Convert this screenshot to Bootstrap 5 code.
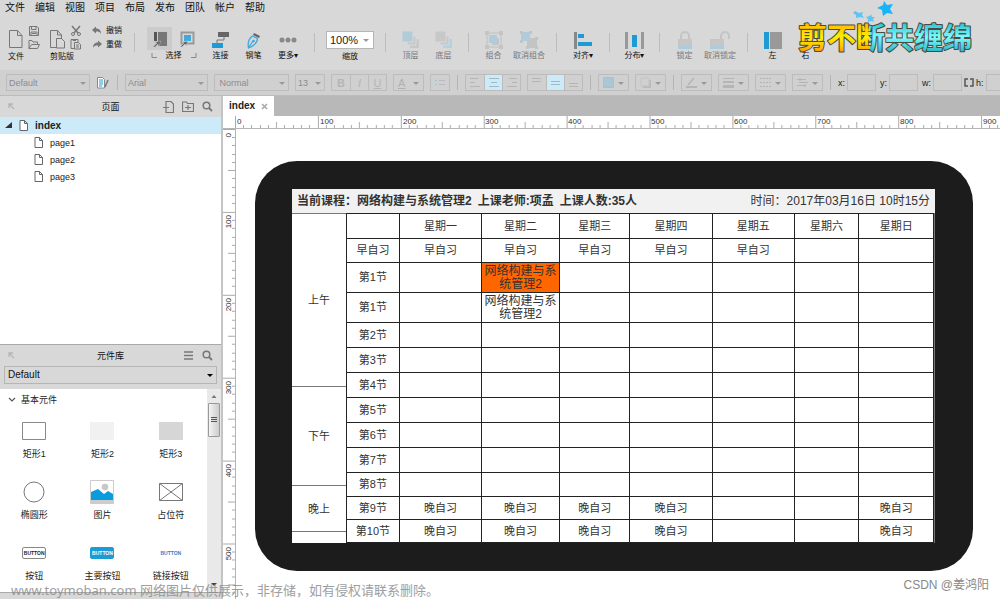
<!DOCTYPE html>
<html lang="zh-CN">
<head>
<meta charset="utf-8">
<meta name="viewport" content="width=device-width, initial-scale=1">
<title>index</title>
<link href="https://cdn.jsdelivr.net/npm/bootstrap@5.3.0/dist/css/bootstrap.min.css" rel="stylesheet">
<script src="https://cdn.jsdelivr.net/npm/bootstrap@5.3.0/dist/js/bootstrap.bundle.min.js"></script>
<style>
body{font-family:"Liberation Sans","Noto Sans CJK SC",sans-serif;font-size:9px;line-height:12px;color:#222;background:#d8d8d8}
button{border:0;background:none;padding:0;color:inherit;font:inherit}
svg{display:block;flex:none}
.menubar{height:16px;padding-left:5px;gap:10px;font-size:10px;line-height:16px}
.menubar a{color:#111;text-decoration:none}
.toolbar{height:54px;padding-left:8px}
.toolbar>*{flex:none}
.vline{width:1px;height:19px;margin:17px 8px 0;background:#bdbdbd}
.tool{width:33px;padding-top:14px;font-size:8px;white-space:nowrap;color:#111;display:flex;flex-direction:column;align-items:center}
.tool .pic{height:20px;display:flex;align-items:center}
.tool.mid{width:36px}.tool.long{width:38px}
.tool:disabled{color:#777}
.filegrp{width:42px;padding-top:9px;font-size:8px;color:#111}
.filegrp .lbl{display:block;white-space:nowrap}
.filegrp .pair{height:26px;gap:4px}
.undo{width:34px;padding-top:9px;font-size:8px;color:#111}
.undo button{display:flex;align-items:center;gap:3px;height:12px;margin-bottom:2px;white-space:nowrap}
.pick{width:61px;padding-top:11px;font-size:8px;color:#111}
.pick .cell{width:25px;height:23px;display:flex;align-items:center;justify-content:center}
.pick .on{background:#cbcbcb}
.zoombox{width:54px;padding-top:15px;font-size:8px;text-align:center;color:#111}
select{appearance:none;border-radius:0;outline:0}
.zoombox select{display:block;width:48px;height:18px;margin:0 auto 2px;border:1px solid #b5b5b5;background:#fff;font-size:11px;padding:0 3px;color:#222}
.drop{position:relative;display:block}
.drop::after{content:"";position:absolute;right:4px;top:50%;margin-top:-1px;border:3px solid transparent;border-top-color:#999;border-bottom:0;pointer-events:none}
.zoombox .drop::after{right:8px}
.formatbar{height:26px;padding:0 0 0 6px;gap:6px;background:#d0d0d0;border-bottom:1px solid #bbb;overflow:hidden}
.formatbar>*{flex:none}
.formatbar .drop select{display:block;width:100%;height:17px;border:1px solid #bcbcbc;background:transparent;color:#8c8c8c;padding:0 2px;font-size:9px;opacity:1}
.fstyle{width:84px}.fface{width:83px}.fweight{width:75px}.fsize{width:30px}
.boxes{height:17px;border:1px solid #bcbcbc;display:flex}
.boxes button{width:18px;display:flex;align-items:center;justify-content:center;color:#b5b5b5;font-size:11px}
.boxes button+button{border-left:1px solid #bcbcbc}
.boxes .on{background:#cceaf8}
.combo{width:31px;height:17px;border:1px solid #bcbcbc;display:flex;align-items:center;padding-left:4px;font-size:11px;color:#b0b0b0}
.bsep{width:1px;height:15px;background:#b5b5b5;margin:0 1px}
.coords{gap:2px}
.coords input{width:29px;height:17px;border:1px solid #bcbcbc;background:transparent;padding:0 2px;margin-right:2px}
.coords .last{margin-right:0}
.side{width:223px;border-right:2px solid #c4c4c4;background:#fff;flex:none}
.pagespanel{height:248px;flex:none}
.phead{height:21px;padding:0 8px;background:#d8d8d8;position:relative;gap:8px}
.phead h2{position:absolute;left:0;right:0;text-align:center;font-size:9px;line-height:12px;margin:0;font-weight:400;color:#111;pointer-events:none}
.trow{height:17px;padding-left:34px;gap:7px;display:flex;align-items:center;color:#222;text-decoration:none}
.trow.top{background:#cceaf8;padding-left:5px;font-weight:700;font-size:10px}
.library{border-top:1px solid #aaa;min-height:0}
.libpick{background:#d8d8d8;padding:0 4px 5px}
.libpick select{display:block;width:100%;height:18px;border:1px solid #b5b5b5;background:transparent;font-size:10px;padding:0 3px;color:#111}
.libpick .drop::after{border-top-color:#000}
.libhead{padding:5px 0 5px 8px;gap:5px}
.tiles{display:grid;grid-template-columns:repeat(3,1fr);padding-right:2px}
.tiles button{height:61px;display:flex;flex-direction:column;align-items:center;color:#222;padding-top:8px}
.tiles .pic{height:24px;display:flex;align-items:center;margin-bottom:5px}
.minibtn{width:24px;height:12px;border:1px solid #888;border-radius:2px;font-size:5px;line-height:10px;font-weight:700;text-align:center}
.minibtn.blue{background:#1d9bd5;border-color:#1d9bd5;color:#fff}
.minibtn.plain{border-color:transparent;color:#3b7dc4}
.scroller{width:14px;background:#e9e9e9;flex:none}
.thumb{width:12px;height:34px;border:1px solid #999;border-radius:1px;background:linear-gradient(90deg,#f4f4f4,#ccc)}
.foot{height:7px;background:#d8d8d8;border-top:1px solid #aaa}
.tabs{height:20px;background:#b8b8b8;flex:none}
.tabs .tab1{background:#fff;width:51px;padding-left:6px;gap:6px;font-weight:700;font-size:10px}
.workarea,.stage{min-width:0}
.workbody{min-height:0}
.hruler{height:13px;background:#fff;flex:none;overflow:hidden;border-bottom:1px solid #b5b5b5}
.vruler{width:13px;flex:none;overflow:hidden;border-right:1px solid #b5b5b5}
.stage{padding:32px 27px 27px 19px}
.device{background:#1c1c1c;border-radius:42px;padding:28px 38px 28px 37px}
.infobar{background:#f1f1f1;height:24px;padding:0 5px;font-size:12px;color:#333;white-space:nowrap}
.lesson{gap:6px;font-weight:700}
.plan{background:#fff;border-right:1px solid #777}
.parts{width:54px;flex:none;font-size:11px;color:#333}
.parts div{display:flex;align-items:center;justify-content:center;border-top:1px solid #777}
.am{height:173px}.pm{height:99px}.eve{height:46px}
.timetable{table-layout:fixed;border-collapse:collapse;width:100%;font-size:11px;line-height:13px;color:#333;text-align:center}
.timetable th,.timetable td{border:1px solid #222;padding:0 2px;font-weight:400;height:25px}
.timetable .short>*{height:24px}.timetable .tall>*{height:30px}.timetable .low>*{height:23px}
.timetable .course{font-size:12px}
.timetable .now{background:#f60}
.timetable th:nth-child(1){width:9%}.timetable th:nth-child(2){width:14%}.timetable th:nth-child(3){width:78px}.timetable th:nth-child(4){width:12%}.timetable th:nth-child(5){width:14%}.timetable th:nth-child(6){width:14%}.timetable th:nth-child(7){width:11%}
.brandmark{position:absolute;right:20px;top:0}
.brandmark text{font-family:"Noto Sans CJK SC",sans-serif;font-weight:700;font-size:29px}
.note{position:absolute;left:11px;bottom:0;font:13px/18px "Noto Sans","Noto Sans CJK SC",sans-serif;color:#888;opacity:.8;white-space:nowrap}
.credit{position:absolute;right:11px;bottom:5px;font-size:12px;line-height:18px;color:#888}
</style>
</head>
<body class="d-flex flex-column vh-100 overflow-hidden position-relative">
<svg width="0" height="0" class="position-absolute">
<symbol id="sheet" viewBox="0 0 9 11"><path d="M1 .5h4.500l3 3v7H1zM5.500.5v3h3" fill="#fff" stroke="#666"/></symbol>
<symbol id="lens" viewBox="0 0 11 11"><circle cx="4.500" cy="4.500" r="3.300" fill="none" stroke="#777" stroke-width="1.500"/><path d="M7 7l3 3" stroke="#777" stroke-width="1.800"/></symbol>
<symbol id="nw" viewBox="0 0 7 7"><path d="M1 5V1h4M1 1l5 5" fill="none" stroke="#b5b5b5" stroke-width="1.300"/></symbol>
</svg>

<nav class="menubar d-flex flex-shrink-0">
<a href="#">文件</a><a href="#">编辑</a><a href="#">视图</a><a href="#">项目</a><a href="#">布局</a><a href="#">发布</a><a href="#">团队</a><a href="#">帐户</a><a href="#">帮助</a>
</nav>

<div class="toolbar d-flex flex-shrink-0">
<div class="filegrp"><div class="pair d-flex">
<button aria-label="新建"><svg width="16" height="26" viewBox="0 0 16 26"><path d="M1.500 5.500h8l4.500 5v12H1.500zM9.500 5.500v5h4.500" fill="none" stroke="#777"/></svg></button>
<span><button class="d-block" aria-label="保存"><svg width="12" height="13"><path d="M1.500 1.500h7.500l1.500 1.500v7.500h-9zM3.500 1.500v3h4.500v-3M3 10.500V7h6v3.500M4 8.500h4" fill="none" stroke="#777"/></svg></button><button class="d-block" aria-label="打开"><svg width="12" height="13"><path d="M1 10.500v-8h3l1 1.500h4.500v2.500M1 10.500l2.500-4h8l-2 4z" fill="none" stroke="#777"/></svg></button></span></div>
<span class="lbl">文件</span></div>
<div class="filegrp"><div class="pair d-flex">
<button aria-label="粘贴"><svg width="16" height="26" viewBox="0 0 16 26"><path d="M6.500 22.500h-6v-17h7l4 4.500v4M7.500 5.500V10h4M6.500 13.500h5l3 3v6.500h-8z" fill="none" stroke="#777"/></svg></button>
<span><button class="d-block" aria-label="剪切"><svg width="12" height="13"><path d="M2 1l6 7M10 1L4 8" stroke="#777" stroke-width="1.500"/><circle cx="3" cy="9" r="1.500" fill="none" stroke="#777"/><circle cx="9" cy="9" r="1.500" fill="none" stroke="#777"/></svg></button><button class="d-block" aria-label="复制"><svg width="12" height="13"><path d="M4 10.500H1v-9h7V4M3 1.500v1h3M4.500 4.500h4l2 2V11h-6zM6 7h3M6 9h3" fill="none" stroke="#777"/></svg></button></span></div>
<span class="lbl">剪贴版</span></div>
<div class="undo">
<button><svg width="11" height="10"><path d="M0 4l4-3.500v2C8 2.500 9 5 9 8 8 6 7 5.500 4 5.500v2z" fill="#777"/></svg>撤销</button>
<button><svg width="11" height="10"><path d="M10 4L6 .5v2C2 2.500 1 5 1 8c1-2 2-2.500 5-2.500v2z" fill="#777"/></svg>重做</button>
</div>
<span class="vline"></span>
<div class="pick">
<div class="d-flex px-1 justify-content-between"><button class="cell on" aria-label="相交选择"><svg width="14" height="16"><path d="M1 1h3v9H1z" fill="#555"/><path d="M5 1h9v14H5z" fill="#777"/><path d="M0 16l4-4-2-1 6-1-2 5-1-2-3 3z" fill="#666" stroke="#bbb" stroke-width=".5"/></svg></button><button class="cell" aria-label="包含选择"><svg width="15" height="16"><path d="M1.500 1.500h12v11h-12z" fill="#d8d8d8" stroke="#999" stroke-width="2"/><path d="M4 4h7v6H4z" fill="#42a9dc"/><path d="M0 16l4-4-2-1 6-1-2 5-1-2-3 3z" fill="#666" stroke="#ddd" stroke-width=".5"/></svg></button></div>
<div class="d-flex justify-content-center align-items-center gap-1"><svg width="7" height="6"><path d="M1 0v4.500h5" fill="none" stroke="#888"/></svg><span class="px-1">选择</span><svg width="7" height="6"><path d="M6 0v4.500H1" fill="none" stroke="#888"/></svg></div>
</div>
<button class="tool"><span class="pic"><svg width="17" height="17"><path d="M6 0h11v5H6z" fill="#666"/><path d="M0 11h11v5H0z" fill="#1d9bd5"/><path d="M12 5v3H5v3" fill="none" stroke="#777"/></svg></span>连接</button>
<button class="tool"><span class="pic"><svg width="14" height="17"><path d="M7 1l6 3-1 2-6-3z" fill="#666"/><path d="M5.500 4l5 2.500c0 4-3 7-9 9.500-1-5 0-9 4-12zM2 15l4-6" fill="none" stroke="#42a9dc" stroke-width="1.300"/><circle cx="6.500" cy="9" r="1.300" fill="#42a9dc"/></svg></span>钢笔</button>
<button class="tool mid"><span class="pic"><svg width="18" height="6"><g fill="#888"><circle cx="3" cy="3" r="2.500"/><circle cx="9" cy="3" r="2.500"/><circle cx="15" cy="3" r="2.500"/></g></svg></span>更多▾</button>
<span class="vline"></span>
<div class="zoombox"><span class="drop"><select id="zoom"><option>100%</option></select></span><label for="zoom" class="d-block">缩放</label></div>
<span class="vline"></span>
<button class="tool" disabled><span class="pic"><svg width="18" height="18"><path d="M8 8h9v9H8z" fill="#c8c8c8"/><path d="M5 5h9v9H5z" fill="#c8c8c8" stroke="#d8d8d8"/><path d="M0 0h11v11H0z" fill="#b1ccd9" stroke="#d8d8d8"/></svg></span>顶层</button>
<button class="tool" disabled><span class="pic"><svg width="18" height="18"><path d="M8 8h9v9H8z" fill="#b1d2e2"/><path d="M5 5h9v9H5z" fill="#c8c8c8" stroke="#d8d8d8"/><path d="M0 0h11v11H0z" fill="#c8c8c8" stroke="#d8d8d8"/></svg></span>底层</button>
<span class="vline"></span>
<button class="tool" disabled><span class="pic"><svg width="18" height="18"><path d="M2 2h14v14H2z" fill="none" stroke="#c0c0c0"/><path d="M7 7h7v7H7z" fill="#c4c4c4"/><path d="M4 4h8v8H4z" fill="#b1ccd9"/><path d="M0 0h4v4H0zM14 0h4v4h-4zM0 14h4v4H0zM14 14h4v4h-4z" fill="#c4c4c4"/></svg></span>组合</button>
<button class="tool long" disabled><span class="pic"><svg width="18" height="18"><path d="M7 7h10v10H7z" fill="#c4c4c4"/><path d="M1 1h9v9H1z" fill="#b1ccd9"/><path d="M0 0h3v3H0zM9 0h3v3H9zM0 9h3v3H0zM15 6h3v3h-3zM6 15h3v3H6zM15 15h3v3h-3z" fill="#bbc5ca"/></svg></span>取消组合</button>
<span class="vline"></span>
<button class="tool mid"><span class="pic"><svg width="18" height="17"><path d="M0 0h3v17H0z" fill="#888"/><path d="M4 2h6v4H4zM4 10h14v4H4z" fill="#1d9bd5"/></svg></span>对齐▾</button>
<span class="vline"></span>
<button class="tool"><span class="pic"><svg width="19" height="17"><path d="M0 0h3v17H0zM16 0h3v17h-3z" fill="#999"/><path d="M7 3h5v12H7z" fill="#1d9bd5"/></svg></span>分布▾</button>
<span class="vline"></span>
<button class="tool" disabled><span class="pic"><svg width="16" height="19"><path d="M4 8V5a4 4 0 018 0v3" fill="none" stroke="#c4c4c4" stroke-width="2"/><path d="M1 8h14v7H1z" fill="#c6c6c6"/><path d="M1 15h14v3H1z" fill="#a9cddd"/></svg></span>锁定</button>
<button class="tool long" disabled><span class="pic"><svg width="22" height="19"><path d="M12 8V5a4 4 0 018 0v3" fill="none" stroke="#c4c4c4" stroke-width="2"/><path d="M1 8h14v7H1z" fill="#c6c6c6"/><path d="M1 15h14v3H1z" fill="#a9cddd"/></svg></span>取消锁定</button>
<span class="vline"></span>
<button class="tool"><span class="pic"><svg width="18" height="18"><path d="M0 1h5v17H0z" fill="#1d9bd5"/><path d="M6 1h12v17H6z" fill="#999"/></svg></span>左</button>
<button class="tool"><span class="pic"></span>右</button>
</div>

<div class="formatbar d-flex align-items-center flex-shrink-0">
<span class="drop fstyle"><select aria-label="样式" disabled><option>Default</option></select></span>
<button aria-label="样式编辑器"><svg width="14" height="12"><path d="M1.500.5h5l2 2V11h-7z" fill="#fff" stroke="#888"/><path d="M3 3h4M3 5h4M3 7h4M3 9h3" stroke="#1d9bd5"/><path d="M12 3L9 10" stroke="#777" stroke-width="1.500"/></svg></button>
<span class="bsep"></span>
<span class="drop fface"><select aria-label="字体" disabled><option>Arial</option></select></span>
<span class="drop fweight"><select aria-label="字形" disabled><option>&nbsp;Normal</option></select></span>
<span class="drop fsize"><select aria-label="字号" disabled><option>13</option></select></span>
<div class="boxes"><button><b>B</b></button><button><i>I</i></button><button><u>U</u></button></div>
<button class="combo drop d-flex"><u>A</u></button>
<div class="boxes"><button aria-label="列表"><svg width="10" height="8"><path d="M4 1.500h6M4 5.500h6" stroke="#bbb"/><path d="M0 1.500h2M0 5.500h2" stroke="#9cc8dc"/></svg></button></div>
<span class="bsep"></span>
<div class="boxes">
<button aria-label="左对齐"><svg width="10" height="11"><path d="M0 1.500h8M0 5.500h5M0 9.500h10" stroke="#b5b5b5"/></svg></button>
<button class="on" aria-label="居中"><svg width="10" height="11"><path d="M0 1.500h10M2 5.500h6M0 9.500h10" stroke="#9dbac6"/></svg></button>
<button aria-label="右对齐"><svg width="10" height="11"><path d="M2 1.500h8M5 5.500h5M0 9.500h10" stroke="#b5b5b5"/></svg></button></div>
<div class="boxes">
<button aria-label="顶部"><svg width="10" height="11"><path d="M0 1.500h9M0 4.500h9" stroke="#b5b5b5"/></svg></button>
<button class="on" aria-label="中部"><svg width="10" height="11"><path d="M0 4.500h9M0 7.500h9" stroke="#9dbac6"/></svg></button>
<button aria-label="底部"><svg width="10" height="11"><path d="M0 6.500h9M0 9.500h9" stroke="#b5b5b5"/></svg></button></div>
<span class="bsep"></span>
<button class="combo drop d-flex" aria-label="填充"><svg width="11" height="11"><path d="M.5.5h10v10H.5z" fill="#a9c8d6" stroke="#bbb"/></svg></button>
<button class="combo drop d-flex" aria-label="阴影"><svg width="11" height="11"><path d="M3 3h8v8H3z" fill="#bbb"/><path d="M1 1h8v8H1z" fill="#d0d0d0" stroke="#c4c4c4"/></svg></button>
<span class="bsep"></span>
<button class="combo drop d-flex" aria-label="线条颜色"><svg width="11" height="11"><path d="M0 10h11" stroke="#b5b5b5" stroke-width="2"/><path d="M2 8l6-7" stroke="#b5b5b5" stroke-width="1.500"/></svg></button>
<button class="combo drop d-flex" aria-label="线宽"><svg width="11" height="11"><path d="M0 1.500h11" stroke="#b5b5b5"/><path d="M0 5h11" stroke="#b5b5b5" stroke-width="2"/><path d="M0 9.500h11" stroke="#b5b5b5" stroke-width="3"/></svg></button>
<button class="combo drop d-flex" aria-label="线型"><svg width="11" height="11"><path d="M0 1.500h11M0 5.500h11M0 9.500h11" stroke="#b5b5b5" stroke-dasharray="2 1"/></svg></button>
<button class="combo drop d-flex" aria-label="箭头"><svg width="11" height="11"><path d="M0 2.500h9M2 5.500h9M0 8.500h9M3 1v3M8 7v3" stroke="#b5b5b5"/></svg></button>
<span class="bsep"></span>
<div class="coords d-flex align-items-center">
<label for="cx">x:</label><input id="cx"><label for="cy">y:</label><input id="cy"><label for="cw">w:</label><input id="cw" class="last"><svg width="10" height="9"><path d="M4 1H1v7h3M6 1h3v7H6" fill="none" stroke="#555" stroke-width="1.500"/></svg><label for="ch">h:</label><input id="ch"></div>
</div>

<main class="workbody d-flex flex-grow-1">
<aside class="side d-flex flex-column">
<section class="pagespanel">
<header class="phead d-flex align-items-center"><svg width="7" height="7" class="me-auto"><use href="#nw"/></svg><h2>页面</h2>
<button aria-label="添加页面"><svg width="11" height="12"><path d="M3 4V.5h5l2.500 2.500v8.500H3V9M0 6.500h6M3 4v5" fill="none" stroke="#777" stroke-width="1.200"/></svg></button>
<button aria-label="添加文件夹"><svg width="12" height="11"><path d="M.5 10.500V1h4l1 1.500h6v8zM3 6.500h6M6 4v5" fill="none" stroke="#777" stroke-width="1.200"/></svg></button>
<button aria-label="搜索"><svg width="11" height="11"><use href="#lens"/></svg></button></header>
<a href="#" class="trow top"><svg width="7" height="7"><path d="M7 0v6H0z" fill="#333"/></svg><svg width="9" height="11"><use href="#sheet"/></svg>index</a>
<a href="#" class="trow"><svg width="9" height="11"><use href="#sheet"/></svg>page1</a>
<a href="#" class="trow"><svg width="9" height="11"><use href="#sheet"/></svg>page2</a>
<a href="#" class="trow"><svg width="9" height="11"><use href="#sheet"/></svg>page3</a>
</section>
<section class="library d-flex flex-column flex-grow-1">
<header class="phead d-flex align-items-center flex-shrink-0"><svg width="7" height="7" class="me-auto"><use href="#nw"/></svg><h2>元件库</h2>
<button aria-label="菜单"><svg width="11" height="9"><path d="M1 1h9M1 4.500h9M1 8h9" stroke="#777" stroke-width="1.300"/></svg></button>
<button aria-label="搜索元件"><svg width="11" height="11"><use href="#lens"/></svg></button></header>
<div class="libpick"><span class="drop"><select aria-label="元件库"><option>Default</option></select></span></div>
<div class="d-flex flex-grow-1 overflow-hidden">
<div class="flex-grow-1">
<div class="libhead d-flex align-items-center"><svg width="8" height="6"><path d="M1 1l3 3 3-3" fill="none" stroke="#555" stroke-width="1.200"/></svg><span>基本元件</span></div>
<div class="tiles">
<button><span class="pic"><svg width="24" height="18"><path d="M.5.5h23v17H.5z" fill="#fff" stroke="#888"/></svg></span>矩形1</button>
<button><span class="pic"><svg width="24" height="18"><path d="M0 0h24v18H0z" fill="#f1f1f1"/></svg></span>矩形2</button>
<button><span class="pic"><svg width="24" height="18"><path d="M0 0h24v18H0z" fill="#d6d6d6"/></svg></span>矩形3</button>
<button><span class="pic"><svg width="22" height="22"><circle cx="11" cy="11" r="10" fill="#fff" stroke="#777"/></svg></span>椭圆形</button>
<button><span class="pic"><svg width="24" height="24"><path d="M.5.5h23v23H.5z" fill="#fff" stroke="#ccc"/><circle cx="15" cy="7" r="3.300" fill="#c8c8c8"/><path d="M1 12l7-3 6 5 4-3 5 3v6H1z" fill="#0a9bdc"/><path d="M1 20h22v3H1z" fill="#ccc"/></svg></span>图片</button>
<button><span class="pic"><svg width="24" height="18"><path d="M.5.5h23v17H.5zM.5.5l23 17M23.500.5l-23 17" fill="none" stroke="#777"/></svg></span>占位符</button>
<button><span class="pic"><span class="minibtn">BUTTON</span></span>按钮</button>
<button><span class="pic"><span class="minibtn blue">BUTTON</span></span>主要按钮</button>
<button><span class="pic"><span class="minibtn plain">BUTTON</span></span>链接按钮</button>
</div></div>
<div class="scroller d-flex flex-column align-items-center justify-content-between pb-1">
<div><svg width="12" height="14"><path d="M3.500 9L6 6l2.500 3z" fill="#777"/></svg><div class="thumb d-flex align-items-center justify-content-center"><svg width="6" height="8"><path d="M0 1.500h6M0 3.500h6M0 5.500h6" stroke="#555"/></svg></div></div>
<svg width="6" height="6"><path d="M0 1l3 3 3-3z" fill="#444"/></svg></div>
</div>
<div class="foot flex-shrink-0"></div>
</section>
</aside>

<section class="workarea d-flex flex-column flex-grow-1 bg-white">
<div class="tabs d-flex"><div class="tab1 d-flex align-items-center">index <button aria-label="关闭"><svg width="7" height="7"><path d="M1 1l5 5M6 1L1 6" stroke="#aaa" stroke-width="1.700"/></svg></button></div></div>
<div class="hruler"><svg width="2000" height="12" font-size="8" fill="#333">
<defs><pattern id="hticks" x="12" width="82.900" height="12" patternUnits="userSpaceOnUse"><path d="M.5 0v12M41.500 6v6" stroke="#aaa"/><path d="M8.500 9v3M16.500 9v3M25.500 9v3M33.500 9v3M49.500 9v3M58.500 9v3M66.500 9v3M74.500 9v3" stroke="#aaa"/></pattern></defs>
<rect x="12" width="1988" height="12" fill="url(#hticks)"/>
<text x="14" y="8">0</text><text x="97" y="8">100</text><text x="180" y="8">200</text><text x="262" y="8">300</text><text x="345" y="8">400</text><text x="428" y="8">500</text><text x="511" y="8">600</text><text x="594" y="8">700</text><text x="677" y="8">800</text><text x="760" y="8">900</text></svg></div>
<div class="workbody d-flex flex-grow-1">
<div class="vruler"><svg width="12" height="1500" font-size="8" fill="#333">
<defs><pattern id="vticks" width="12" height="82.900" patternUnits="userSpaceOnUse"><path d="M0 .5h12M5 41.500h7" stroke="#aaa"/><path d="M9 8.500h3M9 16.500h3M9 25.500h3M9 33.500h3M9 49.500h3M9 58.500h3M9 66.500h3M9 74.500h3" stroke="#aaa"/></pattern></defs>
<rect width="12" height="1500" fill="url(#vticks)"/>
<g text-anchor="end"><text transform="translate(8 4) rotate(-90)">0</text><text transform="translate(8 86) rotate(-90)">100</text><text transform="translate(8 169) rotate(-90)">200</text><text transform="translate(8 252) rotate(-90)">300</text><text transform="translate(8 335) rotate(-90)">400</text><text transform="translate(8 418) rotate(-90)">500</text></g></svg></div>
<div class="stage flex-grow-1">
<div class="device">
<div class="infobar d-flex align-items-center justify-content-between"><div class="lesson d-flex"><span>当前课程：网络构建与系统管理2</span><span>上课老师:项孟</span><span>上课人数:35人</span></div><span>时间：2017年03月16日 10时15分</span></div>
<div class="plan d-flex">
<div class="parts"><div class="am">上午</div><div class="pm">下午</div><div class="eve">晚上</div><div></div></div>
<table class="timetable">
<tr><th></th><th>星期一</th><th>星期二</th><th>星期三</th><th>星期四</th><th>星期五</th><th>星期六</th><th>星期日</th></tr>
<tr class="short"><th>早自习</th><td>早自习</td><td>早自习</td><td>早自习</td><td>早自习</td><td>早自习</td><td></td><td></td></tr>
<tr class="tall"><th>第1节</th><td></td><td class="course now">网络构建与系统管理2</td><td></td><td></td><td></td><td></td><td></td></tr>
<tr class="tall"><th>第1节</th><td></td><td class="course">网络构建与系统管理2</td><td></td><td></td><td></td><td></td><td></td></tr>
<tr><th>第2节</th><td></td><td></td><td></td><td></td><td></td><td></td><td></td></tr>
<tr><th>第3节</th><td></td><td></td><td></td><td></td><td></td><td></td><td></td></tr>
<tr><th>第4节</th><td></td><td></td><td></td><td></td><td></td><td></td><td></td></tr>
<tr><th>第5节</th><td></td><td></td><td></td><td></td><td></td><td></td><td></td></tr>
<tr><th>第6节</th><td></td><td></td><td></td><td></td><td></td><td></td><td></td></tr>
<tr><th>第7节</th><td></td><td></td><td></td><td></td><td></td><td></td><td></td></tr>
<tr class="short"><th>第8节</th><td></td><td></td><td></td><td></td><td></td><td></td><td></td></tr>
<tr class="low"><th>第9节</th><td>晚自习</td><td>晚自习</td><td>晚自习</td><td>晚自习</td><td></td><td></td><td>晚自习</td></tr>
<tr class="low"><th>第10节</th><td>晚自习</td><td>晚自习</td><td>晚自习</td><td>晚自习</td><td></td><td></td><td>晚自习</td></tr>
</table>
</div></div></div></div>
</section>
</main>

<svg class="brandmark" width="184" height="60">
<defs>
<linearGradient id="gold" x2="0" y2="1"><stop offset="0" stop-color="#ffb400"/><stop offset=".45" stop-color="#ffee00"/><stop offset=".7" stop-color="#ffc400"/><stop offset="1" stop-color="#ff7a00"/></linearGradient>
<linearGradient id="aqua" x2="0" y2="1"><stop offset="0" stop-color="#25bfcb"/><stop offset=".45" stop-color="#7dfcff"/><stop offset="1" stop-color="#13a3b0"/></linearGradient>
<pattern id="duo" width="184" height="36" y="22" patternUnits="userSpaceOnUse"><path d="M0 0h74v34H0z" fill="url(#gold)"/><path d="M74 0h110v34H74z" fill="url(#aqua)"/></pattern>
</defs>
<text x="2" y="49" fill="url(#duo)" stroke="#4a4a40" stroke-width="2" stroke-linejoin="round" paint-order="stroke">剪不断共缠绵</text>
<path d="M88 1l3 4 6-1-3 5 3 5-6-1-4 3-1-6-5-2 6-3z" fill="#18b4fb"/>
<path d="M59 11l4 2 4-1-1 3 2 3-4-1-4 1v-3l-3-2z" fill="#5cc5f5"/><path d="M75 14l1 3h3l-2 2 1 3-3-1-3 1v-3l-2-2 4-1z" fill="#5cc5f5"/>
</svg>
<div class="note">www.toymoban.com 网络图片仅供展示，非存储，如有侵权请联系删除。</div>
<div class="credit">CSDN @姜鸿阳</div>
</body>
</html>
